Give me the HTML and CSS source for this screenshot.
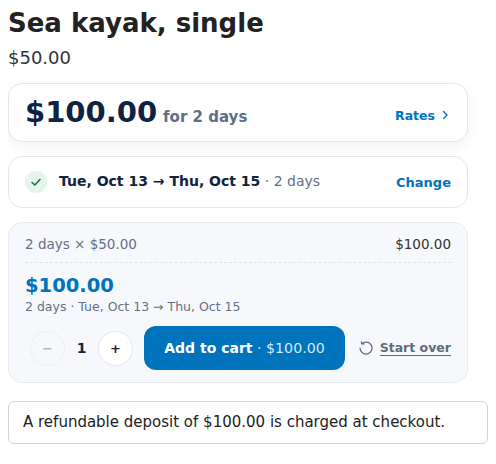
FILE: index.html
```html
<!DOCTYPE html>
<html lang="en">
<head>
  <meta charset="UTF-8" />
  <meta name="viewport" content="width=device-width, initial-scale=1.0"/>
  <title>Sea kayak, single</title>
  <link rel="stylesheet" href="styles.css">
</head>
<body>
  <div class="product">
    <h1>Sea kayak, single</h1>
    <p class="base-price">$50.00</p>

    <div class="card summary">
      <div class="summary-price">
        <span class="big-price">$100.00</span>
        <span class="for-days">for 2 days</span>
      </div>
      <a class="rates" href="#">Rates
        <svg width="12" height="12" viewBox="0 0 12 12" fill="none" stroke="currentColor" stroke-width="1.4" stroke-linecap="round" stroke-linejoin="round"><path d="M4.5 2.5 8 6l-3.5 3.5"/></svg>
      </a>
    </div>

    <div class="card dates">
      <span class="check">
        <svg width="12" height="12" viewBox="0 0 12 12" fill="none" stroke="currentColor" stroke-width="1.6" stroke-linecap="round" stroke-linejoin="round"><path d="M2 6.5 4.8 9 10 3.5"/></svg>
      </span>
      <span class="date-text"><b>Tue, Oct 13 → Thu, Oct 15</b> · 2 days</span>
      <a class="change" href="#">Change</a>
    </div>

    <div class="quote">
      <div class="line">
        <span class="line-label">2 days × $50.00</span>
        <span>$100.00</span>
      </div>
      <div class="total">$100.00</div>
      <div class="total-note">2 days · Tue, Oct 13 → Thu, Oct 15</div>
      <div class="actions">
        <div class="stepper">
          <button class="step step-off">−</button>
          <span class="qty">1</span>
          <button class="step">+</button>
        </div>
        <button class="add"><b>Add to cart</b><span class="add-price"> · $100.00</span></button>
        <a class="restart" href="#">
          <svg width="14" height="14" viewBox="0 0 14 14" fill="none" stroke="currentColor" stroke-width="1.2" stroke-linecap="round" stroke-linejoin="round"><path d="M2.8 2.8A6 6 0 1 1 1 7"/><path d="M2.4 .8 2.8 3l2.2-.2"/></svg>
          <span>Start over</span>
        </a>
      </div>
    </div>
  </div>

  <div class="deposit">A refundable deposit of $100.00 is charged at checkout.</div>
</body>
</html>
```

FILE: styles.css
```css
body {
  font-family: "DejaVu Sans", sans-serif;
  margin: 8px;
  background: #fff;
  color: #222;
}

a {
  text-decoration: none;
}

button {
  font-family: inherit;
  cursor: pointer;
}

.product {
  width: 460px;
}

h1 {
  font-size: 26px;
  line-height: 30px;
  margin: 0;
  padding-bottom: 8px;
  color: #222;
}

.base-price {
  font-size: 18px;
  line-height: 24px;
  margin: 0 0 13px;
  color: #333;
}

.card {
  display: flex;
  align-items: center;
  background: #fff;
  border: 1px solid #e4e7ee;
  border-radius: 14px;
  box-sizing: border-box;
}

.summary {
  height: 59px;
  padding: 0 18px 0 16px;
  justify-content: space-between;
  box-shadow: 0 4px 14px rgba(20, 30, 60, 0.06);
}

.summary-price {
  display: flex;
  align-items: baseline;
  gap: 6px;
  margin-top: -1px;
}

.big-price {
  font-size: 29px;
  font-weight: bold;
  color: #0f2340;
}

.for-days {
  font-size: 15px;
  font-weight: bold;
  color: #5f6f87;
}

.rates {
  display: flex;
  align-items: center;
  gap: 4px;
  margin-top: 5px;
  margin-right: -2px;
  font-size: 12.5px;
  font-weight: bold;
  color: #0073bd;
}

.dates {
  height: 52px;
  margin-top: 14px;
  padding: 0 16px;
}

.check {
  display: flex;
  align-items: center;
  justify-content: center;
  width: 22px;
  height: 22px;
  border-radius: 50%;
  background: #e6f5ec;
  color: #1c7040;
}

.date-text {
  flex: 1;
  margin-left: 12px;
  margin-bottom: 2px;
  font-size: 14px;
  color: #5f6f87;
}

.date-text b {
  font-size: 14px;
  color: #0f2340;
}

.change {
  font-size: 13px;
  font-weight: bold;
  color: #0073bd;
}

.quote {
  margin-top: 14px;
  padding: 13px 16px 12px;
  height: 161px;
  box-sizing: border-box;
  background: #f6f8fc;
  border: 1px solid #e8ebf1;
  border-radius: 14px;
}

.line {
  display: flex;
  justify-content: space-between;
  font-size: 13.5px;
  line-height: 17px;
  padding-bottom: 9px;
  border-bottom: 1px dashed #dfe3ea;
  color: #333;
}

.line-label {
  color: #667085;
}

.total {
  margin-top: 10px;
  font-size: 19.5px;
  line-height: 26px;
  font-weight: bold;
  color: #0073bd;
}

.total-note {
  font-size: 12.5px;
  line-height: 16px;
  color: #667085;
}

.actions {
  display: flex;
  align-items: center;
  margin-top: 11px;
}

.stepper {
  display: flex;
  align-items: center;
  margin-left: 5px;
}

.step {
  width: 35px;
  height: 35px;
  padding: 0;
  border: 1px solid #e4e7ee;
  border-radius: 50%;
  background: #fff;
  font-size: 13px;
  font-weight: bold;
  color: #222;
}

.step-off {
  background: transparent;
  border-color: #eceff4;
  color: #b4bbc6;
}

.qty {
  width: 33px;
  text-align: center;
  font-size: 14px;
  font-weight: bold;
  color: #0f2340;
}

.add {
  width: 201px;
  height: 44px;
  margin-left: 11px;
  padding: 0;
  border: none;
  border-radius: 12px;
  background: #0073bd;
  color: #fff;
  font-size: 14px;
}

.add-price {
  font-size: 14.2px;
  color: #d5e9f7;
}

.restart {
  display: flex;
  align-items: center;
  gap: 7px;
  margin-left: auto;
  font-size: 12.5px;
  font-weight: bold;
  color: #5f6b7c;
}

.restart span {
  border-bottom: 1px solid #5f6b7c;
}

.deposit {
  margin-top: 18px;
  padding: 0 14px;
  height: 43px;
  line-height: 41px;
  box-sizing: border-box;
  border: 1px solid #d4d4d4;
  border-radius: 6px;
  font-size: 15px;
  color: #222;
}
```
